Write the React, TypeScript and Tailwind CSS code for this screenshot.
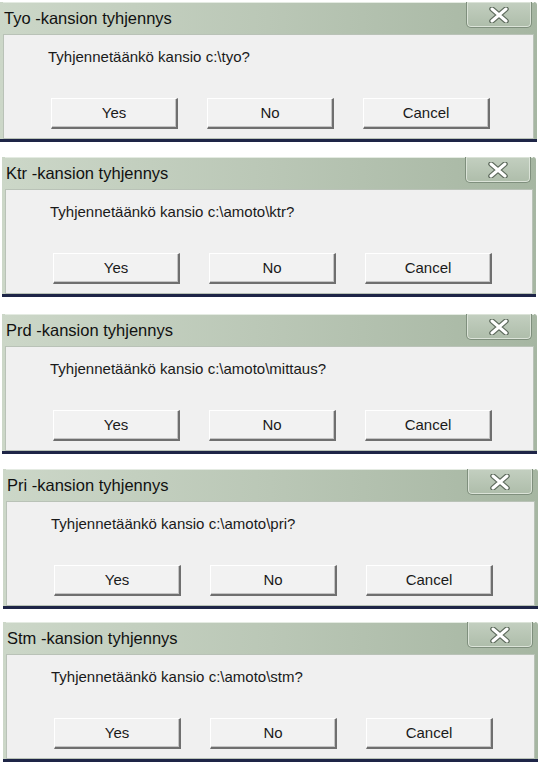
import React from 'react';

type Dialog = {
  title: string;
  path: string;
  wrap: string;
};

const DIALOGS: Dialog[] = [
  { title: 'Tyo -kansion tyhjennys', path: 'c:\\tyo?', wrap: 'mt-[2px] ml-0 w-[537px]' },
  { title: 'Ktr -kansion tyhjennys', path: 'c:\\amoto\\ktr?', wrap: 'mt-[15px] ml-[2px] w-[534px]' },
  { title: 'Prd -kansion tyhjennys', path: 'c:\\amoto\\mittaus?', wrap: 'mt-[17px] ml-[2px] w-[535px]' },
  { title: 'Pri -kansion tyhjennys', path: 'c:\\amoto\\pri?', wrap: 'mt-[15px] ml-[3px] w-[535px]' },
  { title: 'Stm -kansion tyhjennys', path: 'c:\\amoto\\stm?', wrap: 'mt-[13px] ml-[3px] w-[535px]' },
];

function CloseGlyph() {
  return (
    <svg width="24" height="16" viewBox="0 0 24 16">
      <path d="M5 2 L19 14 M19 2 L5 14" stroke="#5d6a5c" strokeWidth="5.5" strokeLinecap="round" fill="none" />
      <path d="M5 2 L19 14 M19 2 L5 14" stroke="#ffffff" strokeWidth="3" strokeLinecap="round" fill="none" />
    </svg>
  );
}

function WinButton({ label }: { label: string }) {
  return (
    <button className="w-[127px] h-[31px] bg-[#f2f2f2] border-t border-l border-white border-r-2 border-b-2 border-r-[#6f6f6f] border-b-[#6f6f6f] shadow-[inset_-1px_-1px_0_#c4c4c4] text-[15px] text-[#1a1a1a]">
      {label}
    </button>
  );
}

function ConfirmDialog({ d }: { d: Dialog }) {
  return (
    <div className={`${d.wrap} relative bg-linear-to-r from-[#ccd7c8] via-[#bac7b6] to-[#a6b6a2] px-[3px] border-b-[3px] border-[#1e2547] rounded-tr-[3px]`}>
      <div className="h-[32px] flex items-center pl-[1px] border-t border-[#e4ebe2]">
        <span className="text-[16.5px] text-[#111] leading-none">{d.title}</span>
      </div>
      <div className="absolute top-0 right-[5px] w-[66px] h-[26px] rounded-b-[5px] border border-t-0 border-[#7f8f7d] bg-linear-to-b from-[#c3cfc0] to-[#aebdaa] shadow-[inset_0_0_0_1px_#dbe3d8] flex items-center justify-center">
        <CloseGlyph />
      </div>
      <div className="h-[105px] bg-[#f0f0f0] border border-[#b9c2b7] flex flex-col">
        <p className="pl-[44px] pt-[12px] text-[15px] leading-[20px] text-[#1a1a1a]">
          Tyhjennetäänkö kansio {d.path}
        </p>
        <div className="mt-auto mb-[9px] pl-[47px] flex gap-[29px]">
          <WinButton label="Yes" />
          <WinButton label="No" />
          <WinButton label="Cancel" />
        </div>
      </div>
    </div>
  );
}

export default function App() {
  return (
    <div className="w-[540px] h-[762px] overflow-hidden bg-white flex flex-col font-['Liberation_Sans',Arial,sans-serif]">
      {DIALOGS.map(d => (
        <ConfirmDialog key={d.title} d={d} />
      ))}
    </div>
  );
}
